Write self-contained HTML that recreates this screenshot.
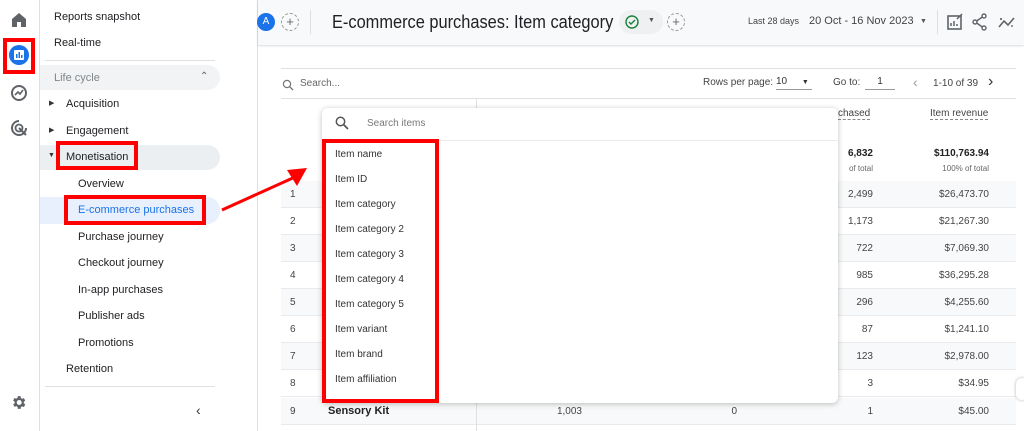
<!DOCTYPE html>
<html><head><meta charset="utf-8"><style>
*{box-sizing:border-box;margin:0;padding:0}
body{width:1024px;height:431px;overflow:hidden;background:#fff;font-family:"Liberation Sans",sans-serif;color:#202124;position:relative}
.a{position:absolute}
.nav{font-size:11px;color:#202124;white-space:nowrap}
.sub{font-size:11px}
.red{border:4px solid #f00;position:absolute}
.row{position:absolute;left:281px;width:735px;height:27px;border-bottom:1px solid #e8eaed}
.num{position:absolute;font-size:10px;color:#444;text-align:right}
.it{position:absolute;left:335px;font-size:10px;color:#333}
</style></head><body>
<div class="a" style="left:0;top:0;width:40px;height:431px;background:#fff;border-right:1px solid #e0e0e0"></div>
<svg class="a" style="left:10px;top:12px" width="18" height="16" viewBox="0 0 18 16"><path d="M9 1 L2 7 V15 H7 V10 H11 V15 H16 V7 Z" fill="#5f6368"/></svg>
<div class="red" style="left:3px;top:38px;width:32px;height:36px"></div>
<div class="a" style="left:9px;top:45px;width:20px;height:20px;border-radius:50%;background:#1a73e8"></div>
<svg class="a" style="left:13px;top:49px" width="12" height="12"><rect x="1" y="1" width="10" height="10" fill="#fff" rx="1"/><rect x="3" y="5" width="1.5" height="4" fill="#1a73e8"/><rect x="5.5" y="3" width="1.5" height="6" fill="#1a73e8"/><rect x="8" y="6" width="1.5" height="3" fill="#1a73e8"/></svg>
<svg class="a" style="left:10px;top:84px" width="18" height="18" viewBox="0 0 18 18"><circle cx="9" cy="9" r="7" fill="none" stroke="#5f6368" stroke-width="2"/><path d="M5 11 L8 8 L10 10 L13 6" fill="none" stroke="#5f6368" stroke-width="1.6"/></svg>
<svg class="a" style="left:10px;top:119px" width="18" height="18" viewBox="0 0 18 18"><path d="M9 2 A7 7 0 1 0 16 9" fill="none" stroke="#5f6368" stroke-width="2"/><circle cx="9" cy="9" r="3.5" fill="none" stroke="#5f6368" stroke-width="1.8"/><path d="M9 9 L16 16" stroke="#5f6368" stroke-width="2"/></svg>
<svg class="a" style="left:10px;top:394px" width="17" height="17" viewBox="0 0 24 24"><path fill="#5f6368" d="M19.4 13a7.5 7.5 0 000-2l2.1-1.6-2-3.5-2.5 1a7 7 0 00-1.7-1L15 3h-4l-.4 2.6a7 7 0 00-1.700 1l-2.5-1-2 3.5L6.6 11a7.5 7.5 0 000 2l-2.1 1.6 2 3.5 2.5-1a7 7 0 001.7 1L11 21h4l.4-2.6a7 7 0 001.7-1l2.5 1 2-3.5zM13 15.5a3.5 3.5 0 110-7 3.5 3.5 0 010 7z"/></svg>

<div class="a" style="left:40px;top:0;width:218px;height:431px;background:#fff;border-right:1px solid #e0e0e0"></div>
<div class="a nav" style="left:54px;top:11px">Reports snapshot</div>
<div class="a nav" style="left:54px;top:37px">Real-time</div>
<div class="a" style="left:45px;top:60px;width:170px;height:1px;background:#e0e0e0"></div>
<div class="a" style="left:40px;top:65px;width:180px;height:25px;background:#f1f3f4;border-radius:0 13px 13px 0"></div>
<div class="a nav" style="left:54px;top:72px;color:#80868b">Life cycle</div>
<div class="a" style="left:200px;top:71px;font-size:10px;color:#5f6368">&#8963;</div>
<div class="a" style="left:49px;top:99px;font-size:7px;color:#333">&#9654;</div>
<div class="a nav" style="left:66px;top:98px">Acquisition</div>
<div class="a" style="left:49px;top:126px;font-size:7px;color:#333">&#9654;</div>
<div class="a nav" style="left:66px;top:125px">Engagement</div>
<div class="a" style="left:40px;top:145px;width:180px;height:25px;background:#eceff1;border-radius:0 13px 13px 0"></div>
<div class="a" style="left:48px;top:152px;font-size:7px;color:#333">&#9660;</div>
<div class="a nav" style="left:66px;top:151px">Monetisation</div>
<div class="red" style="left:56px;top:141px;width:82px;height:29px"></div>
<div class="a nav sub" style="left:78px;top:178px">Overview</div>
<div class="a" style="left:40px;top:197px;width:180px;height:27px;background:#e8f0fe;border-radius:0 13px 13px 0"></div>
<div class="a nav sub" style="left:78px;top:204px;color:#1a73e8">E-commerce purchases</div>
<div class="red" style="left:64px;top:195px;width:142px;height:30px"></div>
<div class="a nav sub" style="left:78px;top:231px">Purchase journey</div>
<div class="a nav sub" style="left:78px;top:257px">Checkout journey</div>
<div class="a nav sub" style="left:78px;top:284px">In-app purchases</div>
<div class="a nav sub" style="left:78px;top:310px">Publisher ads</div>
<div class="a nav sub" style="left:78px;top:337px">Promotions</div>
<div class="a nav" style="left:66px;top:363px">Retention</div>
<div class="a" style="left:45px;top:386px;width:170px;height:1px;background:#e0e0e0"></div>
<div class="a" style="left:196px;top:402px;font-size:14px;color:#333">&#8249;</div>

<div class="a" style="left:258px;top:0;width:766px;height:45px;background:#f8f9fa;box-shadow:0 1px 2px rgba(0,0,0,.15)"></div>
<div class="a" style="left:257px;top:13px;width:18px;height:18px;border-radius:50%;background:#1a73e8;color:#fff;font-size:10px;text-align:center;line-height:18px">A</div>
<div class="a" style="left:281px;top:13px;width:18px;height:18px;border-radius:50%;border:1px dashed #999;color:#666;font-size:13px;text-align:center;line-height:15px">+</div>
<div class="a" style="left:310px;top:10px;width:1px;height:24px;background:#e0e0e0"></div>
<div class="a" style="left:332px;top:12px;font-size:18px;color:#202124;white-space:nowrap;transform:scaleX(0.91);transform-origin:0 0">E-commerce purchases: Item category</div>
<div class="a" style="left:619px;top:10px;width:44px;height:24px;border-radius:12px;background:#eef0f2"></div>
<svg class="a" style="left:625px;top:15px" width="14" height="14"><circle cx="7" cy="7" r="6" fill="none" stroke="#188038" stroke-width="1.4"/><path d="M4 7 L6 9 L10 5" fill="none" stroke="#188038" stroke-width="1.4"/></svg>
<div class="a" style="left:648px;top:17px;font-size:7px;color:#555">&#9660;</div>
<div class="a" style="left:667px;top:13px;width:18px;height:18px;border-radius:50%;border:1px dashed #999;color:#666;font-size:13px;text-align:center;line-height:15px">+</div>
<div class="a" style="left:748px;top:16px;font-size:9px;color:#444">Last 28 days</div>
<div class="a" style="left:809px;top:15px;font-size:11px;color:#444">20 Oct - 16 Nov 2023</div>
<div class="a" style="left:920px;top:18px;font-size:7px;color:#555">&#9660;</div>
<div class="a" style="left:937px;top:10px;width:1px;height:24px;background:#e0e0e0"></div>
<svg class="a" style="left:946px;top:13px" width="18" height="18"><rect x="2" y="3" width="13" height="13" fill="none" stroke="#5f6368" stroke-width="1.6"/><path d="M5 13V10M8 13V8M11 13V11M11 6L16 1" stroke="#5f6368" stroke-width="1.5"/></svg>
<svg class="a" style="left:972px;top:13px" width="16" height="18"><circle cx="12" cy="3" r="2" fill="none" stroke="#5f6368" stroke-width="1.4"/><circle cx="3" cy="9" r="2" fill="none" stroke="#5f6368" stroke-width="1.4"/><circle cx="12" cy="15" r="2" fill="none" stroke="#5f6368" stroke-width="1.4"/><path d="M4.7 8L10.3 4M4.7 10L10.3 14" stroke="#5f6368" stroke-width="1.4"/></svg>
<svg class="a" style="left:998px;top:13px" width="18" height="18"><path d="M1 14 L6 8 L10 12 L16 5" fill="none" stroke="#5f6368" stroke-width="1.6"/><path d="M2 6L4 6M3 5L3 7M13 13L15 13" stroke="#5f6368" stroke-width="1.3"/></svg>

<div class="a" style="left:281px;top:68px;width:735px;height:1px;background:#e0e0e0"></div>
<svg class="a" style="left:282px;top:79px" width="12" height="12"><circle cx="5" cy="5" r="3.6" fill="none" stroke="#777" stroke-width="1.2"/><path d="M7.5 7.5L11 11" stroke="#777" stroke-width="1.3"/></svg>
<div class="a" style="left:300px;top:78px;font-size:10px;color:#666">Search...</div>
<div class="a" style="left:703px;top:77px;font-size:10px;color:#444">Rows per page:</div>
<div class="a" style="left:776px;top:76px;font-size:10px;color:#333;width:36px;border-bottom:1px solid #999;height:14px">10 <span style="font-size:7px;margin-left:12px">&#9660;</span></div>
<div class="a" style="left:833px;top:77px;font-size:10px;color:#444">Go to:</div>
<div class="a" style="left:865px;top:76px;font-size:10px;color:#333;width:30px;border-bottom:1px solid #999;height:14px;text-align:center">1</div>
<div class="a" style="left:913px;top:74px;font-size:14px;color:#999">&#8249;</div>
<div class="a" style="left:933px;top:78px;font-size:10px;color:#444">1-10 of 39</div>
<div class="a" style="left:988px;top:73px;font-size:16px;color:#333">&#8250;</div>
<div class="a" style="left:281px;top:98px;width:735px;height:1px;background:#e0e0e0"></div>
<div class="a" style="left:476px;top:98px;width:1px;height:333px;background:#e0e0e0"></div>
<div class="a" style="left:838px;top:108px;font-size:10px;color:#444;border-bottom:1px dashed #888">chased</div>
<div class="a" style="left:930px;top:108px;font-size:10px;color:#444;border-bottom:1px dashed #888">Item revenue</div>
<div class="num" style="left:780px;top:148px;width:93px;font-weight:bold;color:#222">6,832</div>
<div class="num" style="left:780px;top:164px;width:93px;font-size:8px;color:#666">of total</div>
<div class="num" style="left:880px;top:148px;width:109px;font-weight:bold;color:#222">$110,763.94</div>
<div class="num" style="left:880px;top:164px;width:109px;font-size:8px;color:#666">100% of total</div>

<div class="row" style="top:181px;background:#f8f9fa"></div>
<div class="row" style="top:208px"></div>
<div class="row" style="top:235px;background:#f8f9fa"></div>
<div class="row" style="top:262px"></div>
<div class="row" style="top:289px;background:#f8f9fa"></div>
<div class="row" style="top:316px"></div>
<div class="row" style="top:343px;background:#f8f9fa"></div>
<div class="row" style="top:370px"></div>
<div class="row" style="top:398px;background:#f8f9fa"></div>
<div class="a" style="left:476px;top:181px;width:1px;height:250px;background:#e0e0e0"></div>

<div class="num" style="left:290px;top:189px">1</div><div class="num" style="left:780px;top:189px;width:93px">2,499</div><div class="num" style="left:880px;top:189px;width:109px">$26,473.70</div>
<div class="num" style="left:290px;top:216px">2</div><div class="num" style="left:780px;top:216px;width:93px">1,173</div><div class="num" style="left:880px;top:216px;width:109px">$21,267.30</div>
<div class="num" style="left:290px;top:243px">3</div><div class="num" style="left:780px;top:243px;width:93px">722</div><div class="num" style="left:880px;top:243px;width:109px">$7,069.30</div>
<div class="num" style="left:290px;top:270px">4</div><div class="num" style="left:780px;top:270px;width:93px">985</div><div class="num" style="left:880px;top:270px;width:109px">$36,295.28</div>
<div class="num" style="left:290px;top:297px">5</div><div class="num" style="left:780px;top:297px;width:93px">296</div><div class="num" style="left:880px;top:297px;width:109px">$4,255.60</div>
<div class="num" style="left:290px;top:324px">6</div><div class="num" style="left:780px;top:324px;width:93px">87</div><div class="num" style="left:880px;top:324px;width:109px">$1,241.10</div>
<div class="num" style="left:290px;top:351px">7</div><div class="num" style="left:780px;top:351px;width:93px">123</div><div class="num" style="left:880px;top:351px;width:109px">$2,978.00</div>
<div class="num" style="left:290px;top:378px">8</div><div class="num" style="left:780px;top:378px;width:93px">3</div><div class="num" style="left:880px;top:378px;width:109px">$34.95</div>
<div class="num" style="left:290px;top:406px">9</div>
<div class="a" style="left:328px;top:405px;font-size:11px;font-weight:bold;color:#222">Sensory Kit</div>
<div class="num" style="left:520px;top:406px;width:62px">1,003</div>
<div class="num" style="left:700px;top:406px;width:37px">0</div>
<div class="num" style="left:780px;top:406px;width:93px">1</div><div class="num" style="left:880px;top:406px;width:109px">$45.00</div>

<div class="a" style="left:322px;top:108px;width:516px;height:295px;background:#fff;border-radius:6px;box-shadow:0 1px 6px rgba(0,0,0,.25)"></div>
<div class="a" style="left:322px;top:140px;width:516px;height:1px;background:#e8eaed"></div>
<svg class="a" style="left:335px;top:116px" width="14" height="14"><circle cx="5.5" cy="5.5" r="4.2" fill="none" stroke="#555" stroke-width="1.5"/><path d="M8.5 8.5L13 13" stroke="#555" stroke-width="1.7"/></svg>
<div class="a" style="left:367px;top:118px;font-size:10px;color:#777">Search items</div>
<div class="red" style="left:322px;top:139px;width:117px;height:264px"></div>
<div class="it" style="top:149px">Item name</div>
<div class="it" style="top:174px">Item ID</div>
<div class="it" style="top:199px">Item category</div>
<div class="it" style="top:224px">Item category 2</div>
<div class="it" style="top:249px">Item category 3</div>
<div class="it" style="top:274px">Item category 4</div>
<div class="it" style="top:299px">Item category 5</div>
<div class="it" style="top:324px">Item variant</div>
<div class="it" style="top:349px">Item brand</div>
<div class="it" style="top:374px">Item affiliation</div>

<svg class="a" style="left:215px;top:160px" width="100" height="60"><path d="M7 50 L80 17" stroke="#f00" stroke-width="3"/><path d="M92 8 L72 10 L82 26 Z" fill="#f00"/></svg>
<div class="a" style="left:1016px;top:378px;width:12px;height:22px;border-radius:11px;background:#fff;box-shadow:0 0 3px rgba(0,0,0,.3)"></div>
</body></html>
